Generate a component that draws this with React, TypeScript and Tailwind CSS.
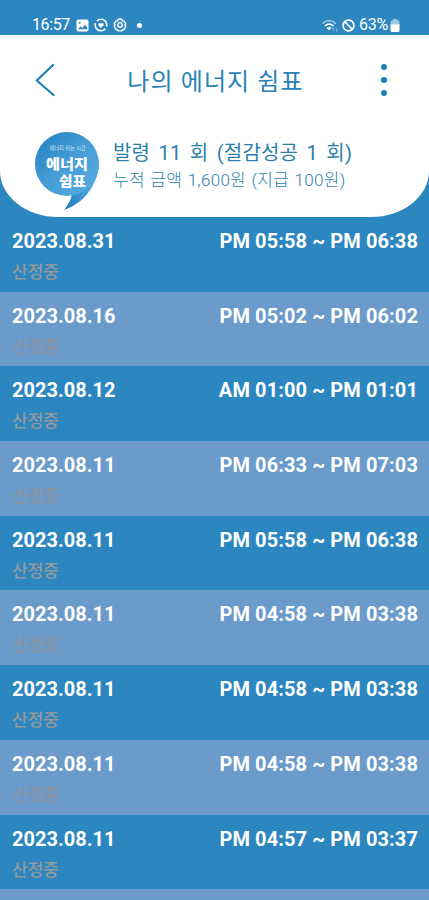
type Saving = {
  date: string;
  time: string;
};

const savings: Saving[] = [
  { date: '2023.08.31', time: 'PM 05:58 ~ PM 06:38' },
  { date: '2023.08.16', time: 'PM 05:02 ~ PM 06:02' },
  { date: '2023.08.12', time: 'AM 01:00 ~ PM 01:01' },
  { date: '2023.08.11', time: 'PM 06:33 ~ PM 07:03' },
  { date: '2023.08.11', time: 'PM 05:58 ~ PM 06:38' },
  { date: '2023.08.11', time: 'PM 04:58 ~ PM 03:38' },
  { date: '2023.08.11', time: 'PM 04:58 ~ PM 03:38' },
  { date: '2023.08.11', time: 'PM 04:58 ~ PM 03:38' },
  { date: '2023.08.11', time: 'PM 04:57 ~ PM 03:37' },
];

function StatusBar() {
  return (
    <div className="flex h-[35px] shrink-0 items-end justify-between pb-[3px] pl-8 pr-[29px] text-white">
      <div className="flex items-center">
        <span className="w-[44px] text-[16px] leading-[14px] tracking-[-0.4px]">16:57</span>
        <svg width="13" height="13" viewBox="0 0 13 13">
          <rect x="0.5" y="0.5" width="12" height="12" rx="2" fill="white" />
          <circle cx="3.7" cy="3.8" r="1" fill="#2c86c0" />
          <path d="M2 10.3 4.6 7.3l1.7 1.6L9 5.7l2.2 2.9v1.7z" fill="#2c86c0" />
        </svg>
        <svg className="ml-[5px]" width="14" height="14" viewBox="0 0 14 14" fill="none" stroke="white">
          <circle cx="7" cy="7" r="5.8" strokeWidth="1.6" strokeDasharray="15.7 2.52" strokeDashoffset="-4" />
          <path d="M7 10 4.4 7.3C3.6 5.4 5.8 4 7 5.7c1.2-1.7 3.4-.3 2.6 1.6z" fill="white" stroke="none" />
        </svg>
        <svg className="ml-[5px]" width="14" height="14" viewBox="0 0 14 14" fill="none" stroke="white" strokeLinejoin="round">
          <path d="M5.2 1.2h3.6l.6 1.5 1.6.2 1.8 3.1-1 1.2 1 1.2-1.8 3.1-1.6.2-.6 1.2H5.2l-.6-1.2-1.6-.2L1.2 8.3l1-1.2-1-1.2L3 2.9l1.6-.2z" strokeWidth="1.4" />
          <circle cx="7" cy="7" r="2.2" strokeWidth="1.5" />
        </svg>
        <span className="ml-[10px] size-[5px] rounded-full bg-white" />
      </div>
      <div className="flex items-center">
        <svg width="17" height="13" viewBox="0 0 17 13" fill="none" stroke="white" strokeLinecap="round">
          <path d="M1 4.3C4.5.8 10 .8 13.5 4.3" strokeWidth="1.2" opacity="0.75" />
          <path d="M3.4 6.6c2.2-2 5.5-2 7.7 0" strokeWidth="1.5" />
          <path d="M5.4 8.8c1.1-.9 2.6-.9 3.7 0L7.3 10.8z" fill="white" strokeWidth="0.8" />
          <path d="M11.3 12V9m-1.2 1.1L11.3 9M14.3 9v3m1.2-1.1L14.3 12" strokeWidth="0.7" opacity="0.5" />
        </svg>
        <svg className="ml-[3px]" width="13" height="13" viewBox="0 0 13 13" fill="none" stroke="white" strokeWidth="1.7">
          <circle cx="6.5" cy="6.5" r="5.4" />
          <path d="m2.7 2.7 7.6 7.6" />
        </svg>
        <span className="ml-1 w-[31px] text-[16px] leading-[14px] tracking-[-0.3px]">63%</span>
        <svg width="10" height="13" viewBox="0 0 10 13" fill="white">
          <path d="M3 0h4v1.5h1A1.5 1.5 0 0 1 9.5 3v3h-9V3A1.5 1.5 0 0 1 2 1.5h1z" opacity="0.55" />
          <path d="M.5 5.5h9v6A1.5 1.5 0 0 1 8 13H2A1.5 1.5 0 0 1 .5 11.5z" />
        </svg>
      </div>
    </div>
  );
}

function Logo() {
  return (
    <svg width="66" height="80" viewBox="0 0 66 80" className="shrink-0">
      <defs>
        <linearGradient id="bubble" x1="0" y1="0" x2="1" y2="1">
          <stop offset="0" stopColor="#2380bf" />
          <stop offset="0.5" stopColor="#449dd6" />
          <stop offset="1" stopColor="#5aaee2" />
        </linearGradient>
        <linearGradient id="tail" x1="1" y1="0" x2="0" y2="1">
          <stop offset="0.3" stopColor="#58ade1" />
          <stop offset="1" stopColor="#1878b8" />
        </linearGradient>
      </defs>
      <path d="M64 32C63 50 52 70 29 78C34 72 36 67 37 62Z" fill="url(#tail)" />
      <circle cx="32" cy="32" r="32" fill="url(#bubble)" />
      <g fill="white" className="font-['Noto_Sans_CJK_KR',sans-serif]">
        <text x="14.5" y="18" fontSize="5.8" opacity="0.75" textLength="36" lengthAdjust="spacingAndGlyphs">에너지 쉬는 시간</text>
        <text fontSize="14" fontWeight="900">
          <tspan x="11" y="36.5" textLength="42" lengthAdjust="spacingAndGlyphs">에너지</tspan>
          <tspan x="24" y="54" textLength="27" lengthAdjust="spacingAndGlyphs">쉼표</tspan>
        </text>
      </g>
    </svg>
  );
}

function Header() {
  return (
    <header className="h-[182px] shrink-0 rounded-b-[58px_46px] bg-white text-[#2b7fac]">
      <div className="flex h-[90px] items-center justify-between pl-[35px] pr-[42px]">
        <button aria-label="뒤로">
          <svg width="20" height="34" viewBox="0 0 20 34" fill="none" stroke="#1f7fb5" strokeWidth="2.2" strokeLinecap="round">
            <path d="M18 2 1.8 17.5 18.5 32" />
          </svg>
        </button>
        <h1 className="mr-[5px] pt-1 text-[24px] leading-none tracking-[1.1px] text-[#2a82b6]">나의 에너지 쉼표</h1>
        <button aria-label="메뉴" className="flex flex-col gap-[7px]">
          <span className="size-1.5 rounded-full bg-[#1580b5]" />
          <span className="size-1.5 rounded-full bg-[#1580b5]" />
          <span className="size-1.5 rounded-full bg-[#1580b5]" />
        </button>
      </div>
      <div className="flex pl-[35px] pt-[7px]">
        <Logo />
        <div className="pl-3 pt-[9px]">
          <p className="text-[20px] leading-6 tracking-[0.2px] whitespace-nowrap [word-spacing:3.2px]">
            발령 11 회 (절감성공 1 회)
          </p>
          <p className="mt-[3px] text-[17px] leading-6 font-light tracking-[0.3px] whitespace-nowrap [word-spacing:1px]">
            누적 금액 1,600원 (지급 100원)
          </p>
        </div>
      </div>
    </header>
  );
}

export default function App() {
  return (
    <div className="flex h-[900px] w-full flex-col overflow-hidden bg-[#2c86c0] font-['Roboto','Noto_Sans_CJK_KR',sans-serif]">
      <StatusBar />
      <Header />
      <ul className="shrink-0">
        {savings.map((saving, i) => (
          <li
            key={i}
            className={`h-[74.7px] pl-3 pr-[11px] pt-3 ${i % 2 ? 'bg-[#6a9bcb]' : 'bg-[#2c86c0]'}`}
          >
            <div className="flex justify-between text-[20px] leading-6 font-bold text-white">
              <span>{saving.date}</span>
              <span className="tracking-[0.1px]">{saving.time}</span>
            </div>
            <p className={`mt-[7px] text-[17px] leading-6 font-medium ${i % 2 ? 'text-[#8c93a0]' : 'text-[#96999a]'}`}>
              산정중
            </p>
          </li>
        ))}
        <li className="h-[74.7px] bg-[#6a9bcb]" />
      </ul>
    </div>
  );
}
